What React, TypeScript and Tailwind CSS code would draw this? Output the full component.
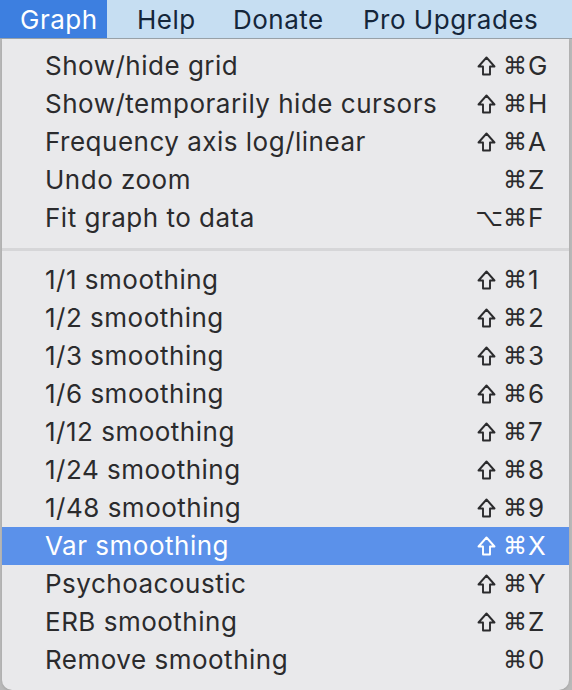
import React from 'react';

type Item = { label: string; shift?: boolean; mods: string; key: string };

const topItems: Item[] = [
  { label: 'Show/hide grid', shift: true, mods: '⌘', key: 'G' },
  { label: 'Show/temporarily hide cursors', shift: true, mods: '⌘', key: 'H' },
  { label: 'Frequency axis log/linear', shift: true, mods: '⌘', key: 'A' },
  { label: 'Undo zoom', mods: '⌘', key: 'Z' },
  { label: 'Fit graph to data', mods: '⌥⌘', key: 'F' },
];

const smoothingItems: Item[] = [
  { label: '1/1 smoothing', shift: true, mods: '⌘', key: '1' },
  { label: '1/2 smoothing', shift: true, mods: '⌘', key: '2' },
  { label: '1/3 smoothing', shift: true, mods: '⌘', key: '3' },
  { label: '1/6 smoothing', shift: true, mods: '⌘', key: '6' },
  { label: '1/12 smoothing', shift: true, mods: '⌘', key: '7' },
  { label: '1/24 smoothing', shift: true, mods: '⌘', key: '8' },
  { label: '1/48 smoothing', shift: true, mods: '⌘', key: '9' },
  { label: 'Var smoothing', shift: true, mods: '⌘', key: 'X' },
  { label: 'Psychoacoustic', shift: true, mods: '⌘', key: 'Y' },
  { label: 'ERB smoothing', shift: true, mods: '⌘', key: 'Z' },
  { label: 'Remove smoothing', mods: '⌘', key: '0' },
];

// outlined shift arrow, like the macOS menu glyph
function ShiftIcon() {
  return (
    <svg width="19" height="20" viewBox="0 0 19 20" className="mr-[7px]">
      <path
        d="M9.5 1.5 L17.5 10.5 H13 V18.5 H6 V10.5 H1.5 Z"
        fill="none"
        stroke="currentColor"
        strokeWidth="1.9"
        strokeLinejoin="round"
      />
    </svg>
  );
}

function MenuRow({ item, active }: { item: Item; active?: boolean }) {
  return (
    <div
      className={
        'flex h-[38px] items-center pl-[43px] pr-[19px] ' +
        (active ? 'bg-[#5b91ea] text-white' : 'text-[#2b2b2d]')
      }
    >
      <span className="flex-1 text-[26px] leading-none tracking-[0.5px]">{item.label}</span>
      <span className="flex items-center text-[26px] leading-none">
        {item.shift && <ShiftIcon />}
        <span className="text-right font-['DejaVu_Sans',sans-serif] text-[24px]">{item.mods}</span>
        <span className="w-[23px] pl-[1px] text-left">{item.key}</span>
      </span>
    </div>
  );
}

export default function App() {
  return (
    <div className="flex h-[690px] w-[572px] flex-col overflow-hidden bg-[#b9b9b9] font-['Inter','DejaVu_Sans',sans-serif]">
      {/* menu bar */}
      <div className="flex h-[39px] items-stretch border-b border-[#9aa3ab] bg-[#c6def2] text-[26px] tracking-[0.5px] text-[#15263a]">
        <div className="flex w-[107px] items-center bg-[#3d7fe0] pl-[20px] text-white">Graph</div>
        <div className="flex w-[126px] items-center pl-[30px]">Help</div>
        <div className="flex w-[130px] items-center">Donate</div>
        <div className="flex items-center">Pro Upgrades</div>
      </div>

      {/* dropdown */}
      <div className="ml-[2px] mr-[3px] flex-1 rounded-b-[10px] bg-[#e9e9eb] pb-[7px] pt-[8px] shadow">
        {topItems.map((it) => (
          <MenuRow key={it.label} item={it} />
        ))}
        <div className="flex h-[24px] items-center">
          <div className="h-[3px] w-full bg-[#d6d6d8]" />
        </div>
        {smoothingItems.map((it) => (
          <MenuRow key={it.label} item={it} active={it.label === 'Var smoothing'} />
        ))}
      </div>
    </div>
  );
}
